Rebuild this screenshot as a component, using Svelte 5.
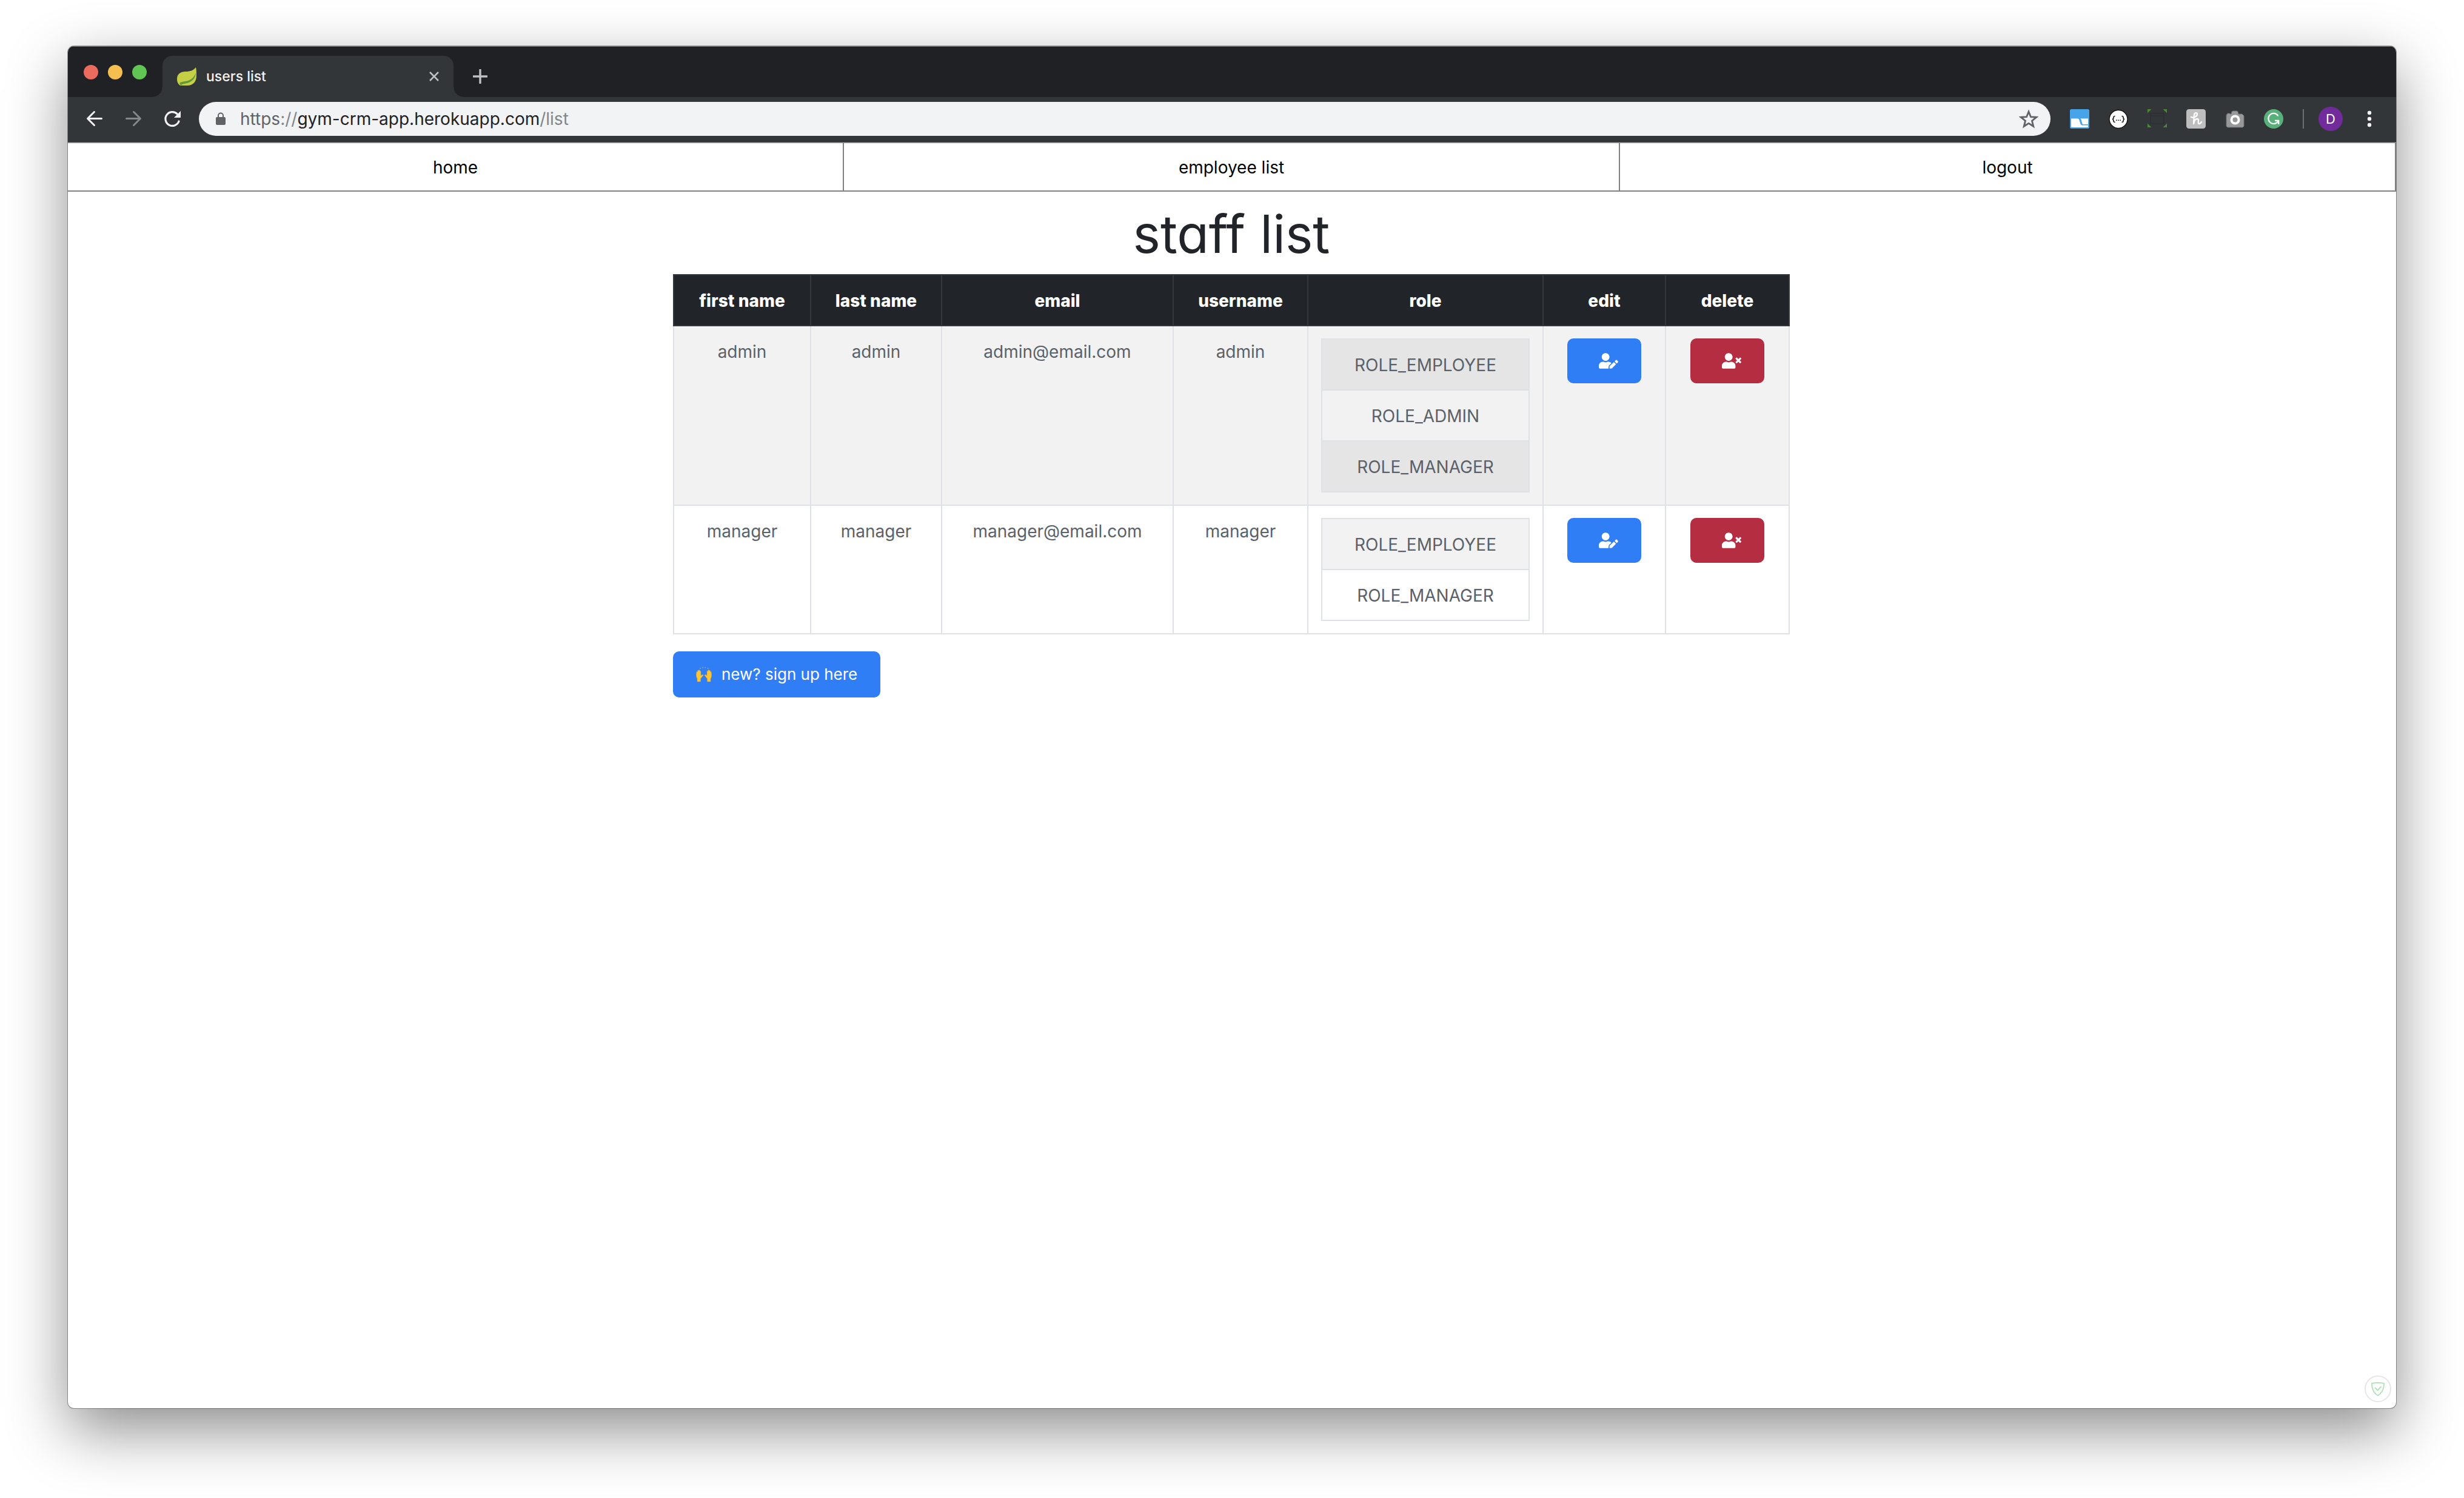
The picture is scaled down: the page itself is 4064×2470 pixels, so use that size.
<script>
  const links = ['home', 'employee list', 'logout'];
  const columns = ['first name', 'last name', 'email', 'username', 'role', 'edit', 'delete'];
  const staff = [
    {
      first: 'admin',
      last: 'admin',
      email: 'admin@email.com',
      username: 'admin',
      roles: ['ROLE_EMPLOYEE', 'ROLE_ADMIN', 'ROLE_MANAGER']
    },
    {
      first: 'manager',
      last: 'manager',
      email: 'manager@email.com',
      username: 'manager',
      roles: ['ROLE_EMPLOYEE', 'ROLE_MANAGER']
    }
  ];
</script>

<div class="desktop">
  <div class="window">
    <header class="tabstrip">
      <div class="lights">
        <button class="light red" aria-label="Close window"></button>
        <button class="light yellow" aria-label="Minimise window"></button>
        <button class="light green" aria-label="Zoom window"></button>
      </div>
      <div class="tab">
        <svg class="favicon" viewBox="0 0 32 32" aria-hidden="true">
          <path d="M31 1c1 4 1 9 1 14 0 10-6 16-15 16H5C1 28 0 24 0 20 0 12 6 8 14 8c8 0 13-2 17-7z" fill="#c6d045" />
          <path d="M31 10c-3 8-9 13-17 14-5 1-8 1-10 3l2 4c3-3 7-3 11-4 9-3 14-9 14-17z" fill="#62983b" />
        </svg>
        <span class="title">users list</span>
        <button class="icon-button close" aria-label="Close tab">
          <svg viewBox="0 0 18 18"><path d="M2 2l14 14M16 2L2 16" stroke="#bdc1c6" stroke-width="2.6" /></svg>
        </button>
      </div>
      <button class="icon-button plus" aria-label="New tab">
        <svg viewBox="0 0 24 24"><path d="M12 1v22M1 12h22" stroke="#bdc1c6" stroke-width="3.4" stroke-linecap="round" /></svg>
      </button>
    </header>

    <div class="toolbar">
      <div class="history">
        <button class="icon-button" aria-label="Back">
          <svg viewBox="0 0 32 32" fill="none" stroke="#f1f3f4" stroke-width="3" stroke-linecap="round" stroke-linejoin="round"><path d="M27.500 15.500H5M15.500 4.500l-11 11 11 11" /></svg>
        </button>
        <button class="icon-button" aria-label="Forward">
          <svg viewBox="0 0 32 32" fill="none" stroke="#85888a" stroke-width="3" stroke-linecap="round" stroke-linejoin="round"><path d="M4.500 15.500H27M16.500 4.500l11 11-11 11" /></svg>
        </button>
        <button class="icon-button" aria-label="Reload">
          <svg viewBox="0 0 32 32"><path d="M27 20a11.400 11.400 0 1 1-2.800-12.200" fill="none" stroke="#f1f3f4" stroke-width="3.200" stroke-linecap="round" /><path d="M30 3v11H19z" fill="#f1f3f4" /></svg>
        </button>
      </div>
      <div class="omnibox">
        <svg class="lock" viewBox="0 0 16 22" aria-hidden="true">
          <path d="M4 9V5.500a4 4 0 0 1 8 0V9" fill="none" stroke="#5f6368" stroke-width="2" />
          <rect y="8" width="16" height="13" rx="2" fill="#5f6368" />
        </svg>
        <div class="url" role="textbox" tabindex="0" aria-label="Address" contenteditable="true" spellcheck="false"><span class="scheme">https</span><span class="dim">://</span>gym-crm-app.herokuapp.com<span class="dim">/list</span></div>
        <button class="icon-button" aria-label="Bookmark">
          <svg viewBox="0 0 32 32"><path d="M16 4l3.400 8.700 9.300.6-7.200 5.900 2.300 9.100L16 23.300l-7.800 5 2.300-9.100-7.200-5.900 9.300-.6z" fill="none" stroke="#5f6368" stroke-width="2.800" /></svg>
        </button>
      </div>
      <div class="extensions">
        <button class="icon-button" aria-label="Window layout">
          <svg viewBox="0 0 32 32"><rect width="32" height="32" rx="2.500" fill="#47a4e9" /><path d="M2 15.500h11c4 0 3 11 7 11h10V29a1 1 0 0 1-1 1H3a1 1 0 0 1-1-1zM17.500 15.500H30V25h-8c-3 0-2-7.500-4.500-9.500z" fill="#fff" /></svg>
        </button>
        <button class="icon-button" aria-label="JSON viewer">
          <svg viewBox="0 0 32 32"><circle cx="16" cy="16.500" r="15" fill="#fff" stroke="#111" stroke-width="1.400" /><g fill="none" stroke="#111" stroke-width="1.500"><path d="M10.500 11.500c-2 0-2.500.5-2.500 2s-.3 2.700-1.800 3c1.500.3 1.800 1.500 1.800 3s.5 2 2.500 2M21.500 11.500c2 0 2.500.5 2.500 2s.3 2.700 1.800 3c-1.500.3-1.800 1.500-1.800 3s-.5 2-2.500 2" /></g><path d="M12 17.500h1.600v1.600H12zM15.200 17.500h1.600v1.600h-1.600zM18.400 17.500H20v1.600h-1.600z" fill="#111" /></svg>
        </button>
        <button class="icon-button" aria-label="Capture area">
          <svg viewBox="0 0 32 32"><path d="M0 0h6.500L0 6.500zM32 0h-6.500L32 6.500zM0 30h6.500L0 23.500zM32 30h-6.500l6.500-6.500z" fill="#4c8735" /><path d="M5 7h22v17H5zM5 11h22" fill="none" stroke="#2c2e30" stroke-width="1.500" /></svg>
        </button>
        <button class="icon-button" aria-label="Coupons">
          <svg viewBox="0 0 32 32"><rect width="32" height="32" rx="4.500" fill="#bebebe" /><path d="M8 13c4 2 10-1 10-5 0-3-5-2.500-5 2l-1 14c1-5 3-8 6-8 4 0 0 8 3 8 2 0 3-1 4-3" fill="none" stroke="#fff" stroke-width="2.400" stroke-linecap="round" stroke-linejoin="round" /></svg>
        </button>
        <button class="icon-button" aria-label="Screenshot">
          <svg viewBox="0 0 32 32"><path d="M3 8h1V7h4v1h2l1-4 2-1h6l2 1 1 4h6l3 3v17l-2 2H4l-2-2V10z" fill="#999" stroke="#6d6f70" stroke-width="1" /><circle cx="16.500" cy="17.500" r="6" fill="#999" stroke="#fff" stroke-width="4" /></svg>
        </button>
        <button class="icon-button" aria-label="Writing assistant">
          <svg viewBox="0 0 32 32"><circle cx="16" cy="16" r="16" fill="#58b17a" /><path d="M23 10.500A8.600 8.600 0 1 0 22.500 21" fill="none" stroke="#fff" stroke-width="2.200" stroke-linecap="round" /><path d="M18 18.800h6.200V25" fill="none" stroke="#fff" stroke-width="2.200" /></svg>
        </button>
      </div>
      <span class="divider"></span>
      <button class="avatar">D</button>
      <button class="icon-button dots" aria-label="Menu">
        <svg viewBox="0 0 24 32" fill="#f1f3f4"><circle cx="12" cy="6" r="3.200" /><circle cx="12" cy="16" r="3.200" /><circle cx="12" cy="26" r="3.200" /></svg>
      </button>
    </div>

    <div class="page">
      <nav>
        {#each links as link}
          <a href="#{link.replace(' ', '-')}">{link}</a>
        {/each}
      </nav>

      <main>
        <h1>staff list</h1>
        <table class="staff">
          <colgroup>
            {#each columns as column}
              <col class={column.replace(' ', '-')} />
            {/each}
          </colgroup>
          <thead>
            <tr>
              {#each columns as column}
                <th scope="col">{column}</th>
              {/each}
            </tr>
          </thead>
          <tbody>
            {#each staff as person}
              <tr>
                <td>{person.first}</td>
                <td>{person.last}</td>
                <td>{person.email}</td>
                <td>{person.username}</td>
                <td class="holder">
                  <table class="roles">
                    <tbody>
                      {#each person.roles as role}
                        <tr><td>{role}</td></tr>
                      {/each}
                    </tbody>
                  </table>
                </td>
                <td class="holder">
                  <button class="action edit" aria-label="Edit {person.username}">
                    <svg viewBox="0 0 640 512" fill="#fff"><path d="M224 256c70.700 0 128-57.300 128-128S294.700 0 224 0 96 57.300 96 128s57.300 128 128 128zm89.600 32h-16.700c-22.200 10.200-46.900 16-72.900 16s-50.600-5.800-72.900-16h-16.700C60.200 288 0 348.200 0 422.400V464c0 26.500 21.500 48 48 48h274.900c-2.400-6.800-3.400-14-2.600-21.300l6.800-60.900 1.200-11.100 7.900-7.900 77.300-77.300c-24.500-27.700-60-45.500-99.900-45.500zm45.300 145.300l-6.800 61c-1.100 10.200 7.500 18.800 17.600 17.600l60.900-6.800 137.900-137.900-71.700-71.700-137.900 137.800zM633 268.900L595.100 231c-9.300-9.300-24.500-9.300-33.800 0l-37.800 37.800-4.100 4.100 71.800 71.700 41.800-41.800c9.300-9.400 9.300-24.500 0-33.900z" /></svg>
                  </button>
                </td>
                <td class="holder">
                  <button class="action delete" aria-label="Delete {person.username}">
                    <svg viewBox="0 0 640 512" fill="#fff"><path d="M589.600 240l45.600-45.600c6.300-6.300 6.300-16.500 0-22.800l-22.800-22.800c-6.300-6.300-16.500-6.300-22.800 0L544 194.400l-45.600-45.600c-6.300-6.300-16.500-6.300-22.800 0l-22.800 22.800c-6.300 6.300-6.300 16.500 0 22.800l45.600 45.600-45.600 45.600c-6.300 6.300-6.300 16.500 0 22.800l22.800 22.800c6.300 6.300 16.500 6.300 22.800 0l45.600-45.600 45.600 45.600c6.300 6.300 16.500 6.300 22.800 0l22.800-22.800c6.300-6.300 6.300-16.500 0-22.800L589.600 240zM224 256c70.700 0 128-57.300 128-128S294.700 0 224 0 96 57.300 96 128s57.300 128 128 128zm89.600 32h-16.700c-22.200 10.200-46.900 16-72.900 16s-50.600-5.800-72.900-16h-16.700C60.200 288 0 348.200 0 422.400V464c0 26.500 21.500 48 48 48h352c26.500 0 48-21.500 48-48v-41.600c0-74.200-60.200-134.400-134.400-134.400z" /></svg>
                  </button>
                </td>
              </tr>
            {/each}
          </tbody>
        </table>
        <button class="signup">
          <svg viewBox="0 0 26 26" aria-hidden="true">
            <g fill="#fbc53a" stroke="#dd9a22" stroke-width=".6">
              <path id="hand" d="M2 25v-5C0 17 0 13 1 9c.3-1 1.500-1 1.600 0V7c.2-1.300 1.600-1.300 1.800 0V6.500c.3-1.300 1.700-1.300 1.900 0V8c.4-1 1.500-.9 1.600.2L8 15l2.400-1.500c1.200-.4 1.900.5 1.200 1.500L7.500 20v5z" />
              <use href="#hand" transform="matrix(-1 0 0 1 26 0)" />
            </g>
            <g fill="#8fa3a0"><circle cx="7" cy="3" r="1" /><circle cx="11" cy="1.800" r="1" /><circle cx="15" cy="1.800" r="1" /><circle cx="19.500" cy="3" r="1" /></g>
          </svg>
          <span>new? sign up here</span>
        </button>
      </main>

      <button class="badge" aria-label="Protection status">
        <svg viewBox="0 0 24 24" fill="none" stroke="#b5e2b9" stroke-width="2" stroke-linecap="round" stroke-linejoin="round"><path d="M2 3c7-1.500 13-1.500 20 0 0 9-3 16-10 20C5 19 2 12 2 3z" /><path d="M7.500 10.500l4 4 5.500-6" /></svg>
      </button>
    </div>
  </div>
</div>

<style>
  :global(body) {
    background: #fff;
    font-family: Inter, "Liberation Sans", sans-serif;
    font-size: 28px;
    line-height: 42px;
  }
  .desktop {
    box-sizing: border-box;
    min-height: 100vh;
    padding: 76px 112px 148px;
    display: flex;
  }
  .window {
    flex: 1;
    min-width: 0;
    display: flex;
    flex-direction: column;
    overflow: hidden;
    border-radius: 10px;
    background: #fff;
    box-shadow: 0 0 0 1px rgba(0, 0, 0, 0.35), 0 36px 100px rgba(0, 0, 0, 0.45);
  }
  button {
    border: 0;
    padding: 0;
    background: none;
    font: inherit;
    color: inherit;
  }
  svg {
    display: block;
  }
  .icon-button {
    width: 32px;
    height: 32px;
    flex: none;
  }
  .icon-button svg {
    width: 100%;
    height: 100%;
  }

  .tabstrip {
    display: flex;
    align-items: flex-end;
    height: 83px;
    background: #202124;
    border-top: 1px solid #77787a;
  }
  .lights {
    display: flex;
    gap: 16px;
    padding: 0 26px 29px;
  }
  .light {
    width: 24px;
    height: 24px;
    border-radius: 50%;
  }
  .red { background: #ed6a5e; }
  .yellow { background: #f5bf4f; }
  .green { background: #61c554; }
  .tab {
    position: relative;
    box-sizing: border-box;
    width: 480px;
    height: 68px;
    padding: 0 23px 0 24px;
    display: flex;
    align-items: center;
    background: #323639;
    border-radius: 16px 16px 0 0;
  }
  .tab::before,
  .tab::after {
    content: "";
    position: absolute;
    bottom: 0;
    width: 16px;
    height: 16px;
  }
  .tab::before {
    right: 100%;
    background: radial-gradient(circle at 0 0, #202124 15px, #323639 16px);
  }
  .tab::after {
    left: 100%;
    background: radial-gradient(circle at 100% 0, #202124 15px, #323639 16px);
  }
  .favicon {
    width: 32px;
    height: 32px;
  }
  .title {
    flex: 1;
    margin-left: 16px;
    font-size: 23px;
    font-weight: 500;
    color: #f1f3f4;
  }
  .close {
    width: 18px;
    height: 18px;
  }
  .plus {
    width: 24px;
    height: 24px;
    margin: 0 0 22px 32px;
  }

  .toolbar {
    display: flex;
    align-items: center;
    padding: 8px 32px 9px 28px;
    background: #323639;
    border-bottom: 1px solid #202124;
  }
  .history,
  .extensions {
    display: flex;
    gap: 32px;
  }
  .omnibox {
    flex: 1;
    box-sizing: border-box;
    height: 56px;
    margin: 0 32px 0 28px;
    padding: 0 20px 0 28px;
    display: flex;
    align-items: center;
    background: #f1f3f4;
    border-radius: 28px;
  }
  .lock {
    width: 16px;
    height: 22px;
  }
  .url {
    flex: 1;
    margin-left: 24px;
    color: #202124;
    outline: none;
    white-space: nowrap;
  }
  .scheme { color: #5f6368; }
  .dim { color: #80868b; }
  .divider {
    width: 2px;
    height: 32px;
    margin: 0 24px 0 32px;
    background: #6d7072;
  }
  .avatar {
    width: 40px;
    height: 40px;
    border-radius: 50%;
    background: #722b9a;
    color: #fff;
    font-size: 22px;
    line-height: 40px;
  }
  .dots {
    width: 24px;
    margin-left: 32px;
  }

  .page {
    position: relative;
    flex: 1;
  }
  nav {
    display: grid;
    grid-template-columns: repeat(3, 1fr);
  }
  nav a {
    border: solid #808080;
    border-width: 2px 2px 2px 0;
    padding: 19px 0 17px;
    text-align: center;
    color: #000;
    text-decoration: none;
  }
  main {
    max-width: 1842px;
    margin: 0 auto;
    padding-right: 2px;
  }
  h1 {
    margin: 16px 0 12px;
    font-size: 86px;
    line-height: 108px;
    font-weight: 400;
    font-feature-settings: "cv11";
    text-align: center;
    color: #212529;
  }
  table {
    width: 100%;
    border-collapse: collapse;
    text-align: center;
  }
  .staff {
    table-layout: fixed;
    color: #5a6169;
  }
  .first-name { width: 226px; }
  .last-name { width: 216px; }
  .email { width: 382px; }
  .username { width: 222px; }
  .role { width: 388px; }
  .edit { width: 202px; }
  .delete { width: 204px; }
  th,
  td {
    border: 2px solid #dee2e6;
    padding: 21px 21px 19px;
    vertical-align: top;
  }
  td.holder {
    padding: 20px 21px;
  }
  th {
    background: #212529;
    border-color: #32383e;
    color: #fff;
    font-weight: 800;
    padding: 21px 0 19px;
  }
  .staff > tbody > tr:nth-child(odd),
  .roles tr:nth-child(odd) {
    background: rgba(0, 0, 0, 0.05);
  }
  .action {
    display: block;
    box-sizing: border-box;
    width: 122px;
    height: 74px;
    margin: 0 auto;
    padding: 0 38px 0 52px;
    border-radius: 10px;
  }
  .action svg {
    width: 32px;
    height: 26px;
  }
  .action.edit { background: #2f7ef6; }
  .action.delete { background: #b52d40; }
  .signup {
    display: flex;
    align-items: center;
    gap: 16px;
    height: 76px;
    margin-top: 28px;
    padding: 0 38px;
    border-radius: 10px;
    background: #2f7ef6;
    color: #fff;
    font-size: 26px;
  }
  .signup svg {
    width: 26px;
    height: 26px;
  }
  .badge {
    position: absolute;
    right: 8px;
    bottom: 10px;
    display: grid;
    place-items: center;
    width: 44px;
    height: 44px;
    border: 2px solid #e6e6e6;
    border-radius: 50%;
  }
  .badge svg {
    width: 24px;
    height: 24px;
  }
</style>
